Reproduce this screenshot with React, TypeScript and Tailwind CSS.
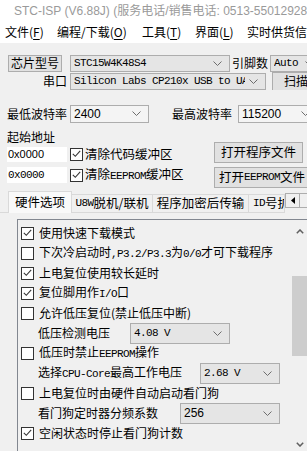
import React from 'react';

// 字体：中文用 Noto Sans CJK，ASCII 小段用等宽字体模拟宋体
const cn = "[font-family:'Noto_Sans_CJK_SC',sans-serif]";

function A({ children }: { children: React.ReactNode }) {
  return (
    <span className="[font-family:'Liberation_Mono',monospace] text-[11px] tracking-[-0.6px]">{children}</span>
  );
}

function Chevron() {
  return (
    <svg width="9" height="5" viewBox="0 0 9 5" className="shrink-0">
      <path d="M0.5 0.5 L4.5 4.5 L8.5 0.5" fill="none" stroke="#6d6d6d" strokeWidth="1" />
    </svg>
  );
}

function Combo({ className, mono, children }: { className: string; mono?: boolean; children: React.ReactNode }) {
  return (
    <div className={`flex items-center border border-[#adadad] bg-[#e5e5e5] pl-[3px] pr-[7px] shrink-0 overflow-hidden ${className}`}>
      <span
        className={`flex-1 min-w-0 overflow-hidden whitespace-nowrap leading-none mr-[4px] ${
          mono
            ? "[font-family:'Liberation_Mono',monospace] text-[11px] tracking-[-0.6px]"
            : "[font-family:'Liberation_Sans',sans-serif] text-[12px]"
        }`}
      >
        {children}
      </span>
      <Chevron />
    </div>
  );
}

function Btn({ className, children }: { className: string; children: React.ReactNode }) {
  return (
    <div className={`flex items-center justify-center border border-[#adadad] bg-[#e1e1e1] shrink-0 whitespace-nowrap overflow-hidden ${className}`}>
      {children}
    </div>
  );
}

function Box({ checked }: { checked: boolean }) {
  return (
    <span className="w-[13px] h-[13px] border border-[#333333] bg-white flex items-center justify-center shrink-0">
      {checked && (
        <svg width="9" height="8" viewBox="0 0 9 8">
          <path d="M0.8 3.8 L3.3 6.3 L8.2 0.9" fill="none" stroke="#333333" strokeWidth="1.1" />
        </svg>
      )}
    </span>
  );
}

function CheckRow({ checked, children }: { checked: boolean; children: React.ReactNode }) {
  return (
    <div className="h-[20px] flex items-center">
      <Box checked={checked} />
      <span className="ml-[5px] whitespace-nowrap leading-none">{children}</span>
    </div>
  );
}

function Logo() {
  return (
    <svg width="13" height="12" viewBox="0 0 13 12">
      <path d="M1 1 Q8 1 12 6" fill="none" stroke="#e8455a" strokeWidth="1.3" />
      <path d="M1 3.5 Q7 3.5 10 8" fill="none" stroke="#e8455a" strokeWidth="1.3" />
      <path d="M1 6 Q6 6 8 10" fill="none" stroke="#e8455a" strokeWidth="1.3" />
      <path d="M1 11.5 L1 9 Q1 8 3 8 Q5 8 5 11.5" fill="none" stroke="#1f3fcf" strokeWidth="1.6" />
      <path d="M7 11.5 L7 9 M9.5 11.5 L9.5 9 M12 11.5 L12 8" fill="none" stroke="#1f3fcf" strokeWidth="1.6" />
    </svg>
  );
}

function Menu({ w, t, k }: { w: string; t: string; k: string }) {
  return (
    <div className={`${w} shrink-0 whitespace-nowrap`}>
      {t}(<span className="underline underline-offset-2">{k}</span>)
    </div>
  );
}

export default function App() {
  return (
    <div className={`w-[307px] h-[451px] overflow-hidden bg-[#f0f0f0] text-[12px] text-black ${cn}`}>
      {/* 标题栏 */}
      <div className="h-[21px] bg-white flex items-center pl-[5px] whitespace-nowrap overflow-hidden">
        <Logo />
        <span className="ml-[9px] text-[#9a9a9a] [font-family:'Liberation_Sans','Noto_Sans_CJK_SC',sans-serif] text-[12px]">
          STC-ISP (V6.88J) (服务电话/销售电话: 0513-55012928)
        </span>
      </div>

      {/* 菜单栏 */}
      <div className="h-[22px] bg-white flex items-center pl-[5px] overflow-hidden leading-none">
        <Menu w="w-[52px]" t="文件" k="F" />
        <Menu w="w-[85px]" t="编程/下载" k="O" />
        <Menu w="w-[53px]" t="工具" k="T" />
        <Menu w="w-[52px]" t="界面" k="L" />
        <div className="shrink-0 whitespace-nowrap">实时供货信息</div>
      </div>

      {/* 芯片型号 */}
      <div className="mt-[11px] h-[18px] flex items-center whitespace-nowrap overflow-hidden">
        <Btn className="ml-[8px] w-[54px] h-[17px]">芯片型号</Btn>
        <Combo className="ml-[8px] w-[160px] h-[17px]" mono>
          STC15W4K48S4
        </Combo>
        <span className="ml-[2px] w-[36px] shrink-0">引脚数</span>
        <Combo className="ml-[2px] w-[52px] h-[17px]" mono>
          Auto
        </Combo>
      </div>

      {/* 串口 */}
      <div className="h-[18px] flex items-center whitespace-nowrap overflow-hidden">
        <span className="w-[68px] text-right pr-[1px] shrink-0">串口</span>
        <Combo className="ml-[2px] w-[196px] h-[17px]" mono>
          Silicon Labs CP210x USB to UART Bridge
        </Combo>
        <Btn className="ml-[6px] w-[60px] h-[19px] justify-start pl-[11px]">扫描</Btn>
      </div>

      {/* 波特率 */}
      <div className="mt-[14px] h-[19px] flex items-center whitespace-nowrap">
        <span className="ml-[7px] w-[61px] shrink-0">最低波特率</span>
        <Combo className="ml-[2px] w-[79px] h-[18px] bg-[#f4f4f4]">2400</Combo>
        <span className="ml-[23px] w-[60px] shrink-0">最高波特率</span>
        <Combo className="ml-[6px] w-[80px] h-[18px] bg-[#f4f4f4]">115200</Combo>
      </div>

      {/* 起始地址 / 文件按钮 */}
      <div className="flex whitespace-nowrap">
        <div className="ml-[7px] w-[200px] shrink-0">
          <div className="mt-[6px] h-[16px] leading-[16px]">起始地址</div>
          <div className="mt-[1px] h-[16px] flex items-center">
            <div className="w-[60px] h-[15px] bg-white flex items-center pl-[1px] [font-family:'Liberation_Sans',sans-serif] text-[11px]">
              0x0000
            </div>
            <span className="ml-[3px]">
              <Box checked />
            </span>
            <span className="ml-[2px] text-[12.5px]">清除代码缓冲区</span>
          </div>
          <div className="mt-[5px] h-[16px] flex items-center">
            <div className="w-[60px] h-[16px] bg-white flex items-center pl-[1px]">
              <A>0x0000</A>
            </div>
            <span className="ml-[3px]">
              <Box checked />
            </span>
            <span className="ml-[2px] text-[12.5px]">
              清除<A>EEPROM</A>缓冲区
            </span>
          </div>
        </div>
        <div className="ml-[7px] shrink-0">
          <Btn className="mt-[19px] w-[89px] h-[21px] text-[12.5px]">打开程序文件</Btn>
          <Btn className="mt-[4px] w-[100px] h-[21px] text-[12.5px] justify-start pl-[4px]">
            打开<A>EEPROM</A>文件
          </Btn>
        </div>
      </div>

      {/* 选项卡 */}
      <div className="mt-[3px] h-[22px] flex items-end whitespace-nowrap text-[12.5px]">
        <div className="w-[8px] h-full border-b border-[#d9d9d9] shrink-0" />
        <div className="w-[64px] h-[22px] bg-[#f9f9f9] border border-b-0 border-[#d9d9d9] flex items-center justify-center shrink-0 pb-[1px]">
          硬件选项
        </div>
        <div className="w-[81px] h-[19px] border border-l-0 border-[#d9d9d9] flex items-center justify-center shrink-0">
          <A>U8W</A>脱机/联机
        </div>
        <div className="w-[96px] h-[19px] border border-l-0 border-[#d9d9d9] flex items-center justify-center shrink-0">
          程序加密后传输
        </div>
        <div className="w-[36px] h-[19px] border border-l-0 border-[#d9d9d9] flex items-center pl-[4px] shrink-0 overflow-hidden">
          <A>ID</A>号扩
        </div>
        <div className="h-full flex items-start pt-[2px] shrink-0">
          <div className="w-[15px] h-[15px] border border-[#adadad] bg-[#f0f0f0] flex items-center justify-center">
            <svg width="4" height="7" viewBox="0 0 4 7">
              <path d="M4 0 L0 3.5 L4 7 Z" fill="#000" />
            </svg>
          </div>
          <div className="w-[15px] h-[15px] border border-l-0 border-[#adadad] bg-[#f0f0f0]" />
        </div>
      </div>

      {/* 硬件选项列表 */}
      <div className="mt-[6px] ml-[17px] w-[291px] h-[234px] border-l border-t border-[#828790] flex">
        <div className="flex-1 pl-[3px] pt-[3px] overflow-hidden">
          <CheckRow checked>使用快速下载模式</CheckRow>
          <CheckRow checked={false}>
            下次冷启动时<A>,P3.2/P3.3</A>为<A>0/0</A>才可下载程序
          </CheckRow>
          <CheckRow checked>上电复位使用较长延时</CheckRow>
          <CheckRow checked>
            复位脚用作<A>I/O</A>口
          </CheckRow>
          <CheckRow checked={false}>允许低压复位(禁止低压中断)</CheckRow>
          <div className="h-[20px] flex items-center pl-[17px] whitespace-nowrap">
            <span className="w-[92px] shrink-0 leading-none">低压检测电压</span>
            <Combo className="w-[100px] h-[21px]" mono>
              4.08 V
            </Combo>
          </div>
          <CheckRow checked={false}>
            低压时禁止<A>EEPROM</A>操作
          </CheckRow>
          <div className="h-[20px] flex items-center pl-[17px] whitespace-nowrap">
            <span className="w-[162px] shrink-0 leading-none">
              选择<A>CPU-Core</A>最高工作电压
            </span>
            <Combo className="w-[80px] h-[21px]" mono>
              2.68 V
            </Combo>
          </div>
          <CheckRow checked={false}>上电复位时由硬件自动启动看门狗</CheckRow>
          <div className="h-[20px] flex items-center pl-[17px] whitespace-nowrap">
            <span className="w-[142px] shrink-0 leading-none">看门狗定时器分频系数</span>
            <Combo className="w-[100px] h-[21px]">256</Combo>
          </div>
          <CheckRow checked>空闲状态时停止看门狗计数</CheckRow>
        </div>
        {/* 滚动条 */}
        <div className="w-[17px] flex flex-col shrink-0">
          <div className="h-[21px] flex items-center justify-center pt-[2px]">
            <svg width="8" height="5" viewBox="0 0 8 5">
              <path d="M0.8 4.3 L4 1 L7.2 4.3" fill="none" stroke="#606060" strokeWidth="1.5" />
            </svg>
          </div>
          <div className="flex-1 pt-[35px]">
            <div className="mx-[1px] h-[80px] bg-[#cdcdcd]" />
          </div>
          <div className="h-[17px] flex items-center justify-center">
            <svg width="8" height="5" viewBox="0 0 8 5">
              <path d="M0.8 0.7 L4 4 L7.2 0.7" fill="none" stroke="#606060" strokeWidth="1.5" />
            </svg>
          </div>
        </div>
      </div>
    </div>
  );
}
